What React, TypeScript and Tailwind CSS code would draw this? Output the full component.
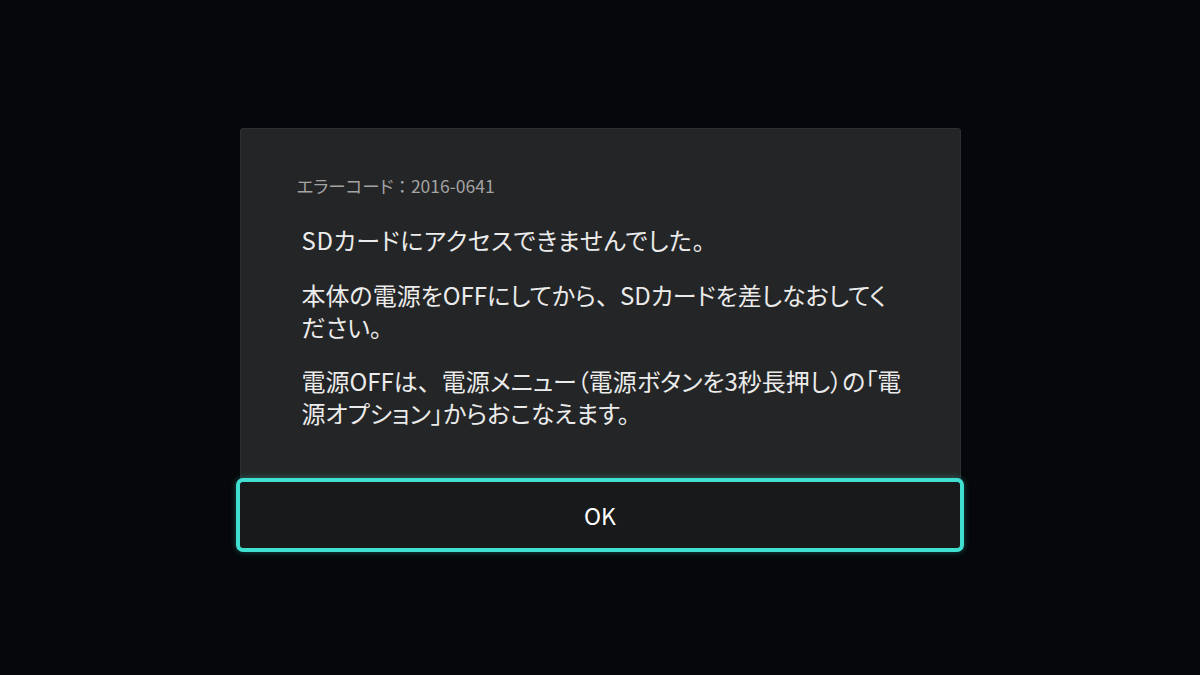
export default function App() {
  const jp = { fontFamily: '"Noto Sans CJK JP", "Noto Sans", sans-serif', fontFeatureSettings: '"palt"' };
  const full = { fontFeatureSettings: "normal" };

  return (
    <div className="w-[1200px] h-[675px] bg-[#05070a] flex items-center justify-center" style={jp}>
      <div className="flex flex-col items-center mt-[5px]">
        {/* Message panel */}
        <div className="w-[721px] h-[351px] bg-[#242526] border border-[#2e2f31] rounded-t-[3px] pt-[46px] pl-[56px] text-[#ebebeb]">
          <div className="text-[17.5px] leading-[22px] text-[#a3a3a3]">
            エラーコード<span style={full}>：</span>2016-0641
          </div>
          <div className="pl-[5px] mt-[27px] text-[24px] leading-[32px]">
            <p className="whitespace-nowrap tracking-[0.6px]">SDカードにアクセスできませんでした。</p>
            <p className="whitespace-nowrap mt-[23px]">
              本体の電源をOFFにしてから<span style={full}>、</span>SDカードを差しなおしてく
              <br />
              ださい。
            </p>
            <p className="whitespace-nowrap mt-[22px]">
              電源OFFは<span style={full}>、</span>電源メニュー（電源ボタンを3秒長押し）の「電
              <br />
              源オプション」からおこなえます。
            </p>
          </div>
        </div>

        {/* OK button */}
        <button className="w-[728px] h-[74px] -mt-[1px] bg-[#18191a] border-[4px] border-[#3fe0cf] rounded-[7px] shadow-[0_0_6px_rgba(63,224,207,0.35)] text-[23px] text-white">
          OK
        </button>
      </div>
    </div>
  );
}
